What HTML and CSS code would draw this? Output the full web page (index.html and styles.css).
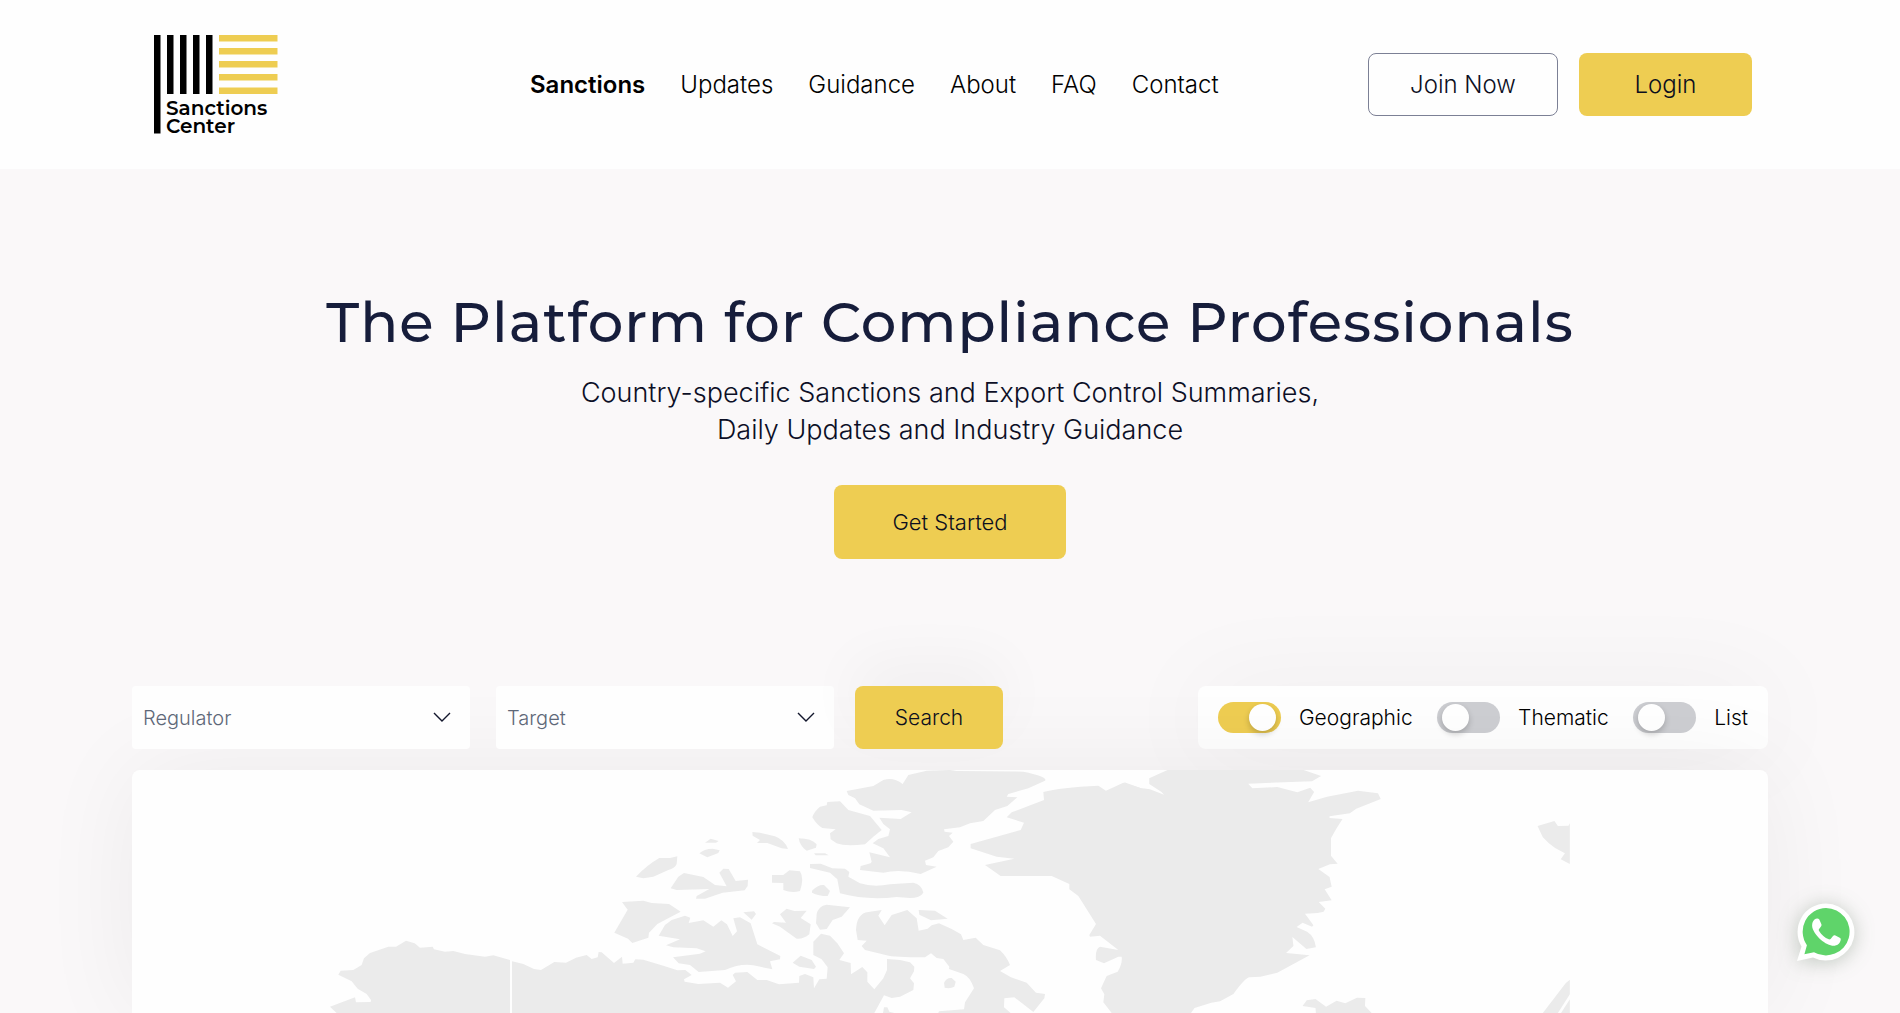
FILE: index.html
```html
<!DOCTYPE html>
<html lang="en">
<head>
<meta charset="utf-8">
<meta name="viewport" content="width=device-width, initial-scale=1">
<title>Sanctions Center</title>
<link rel="stylesheet" href="styles.css">
</head>
<body>
<header class="site-header">
  <div class="header-inner">
    <a class="logo" href="#" aria-label="Sanctions Center">
      <svg width="125" height="99" viewBox="0 0 125 99">
        <g fill="#000">
          <rect x="0" y="0" width="6.5" height="98.500"/>
          <rect x="13" y="0" width="6.5" height="59"/>
          <rect x="26" y="0" width="6.5" height="59"/>
          <rect x="39" y="0" width="6.5" height="59"/>
          <rect x="52" y="0" width="6.5" height="59"/>
        </g>
        <g fill="#eecd52">
          <rect x="65" y="0" width="58.500" height="6.5"/>
          <rect x="65" y="13" width="58.500" height="6.5"/>
          <rect x="65" y="26" width="58.500" height="6.5"/>
          <rect x="65" y="39" width="58.500" height="6.5"/>
          <rect x="65" y="52.500" width="58.500" height="6.5"/>
        </g>
        <g class="logo-text">
          <text x="12" y="80">Sanctions</text>
          <text x="12" y="98">Center</text>
        </g>
      </svg>
    </a>
    <nav class="main-nav">
      <a class="current" href="#">Sanctions</a>
      <a href="#">Updates</a>
      <a href="#">Guidance</a>
      <a href="#">About</a>
      <a href="#">FAQ</a>
      <a href="#">Contact</a>
    </nav>
    <div class="account">
      <button class="btn btn-outline" type="button">Join Now</button>
      <button class="btn btn-login" type="button">Login</button>
    </div>
  </div>
</header>

<main class="page">
  <section class="hero">
    <h1>The Platform for Compliance Professionals</h1>
    <p>Country-specific Sanctions and Export Control Summaries,<br>Daily Updates and Industry Guidance</p>
    <button class="btn btn-start" type="button">Get Started</button>
  </section>

  <section class="explorer">
    <div class="toolbar">
      <form class="filters">
        <div class="select-box">
          <select aria-label="Regulator"><option>Regulator</option></select>
          <svg class="chevron" width="18" height="11" viewBox="0 0 18 11"><path d="M1 1l8 8 8-8"/></svg>
        </div>
        <div class="select-box">
          <select aria-label="Target"><option>Target</option></select>
          <svg class="chevron" width="18" height="11" viewBox="0 0 18 11"><path d="M1 1l8 8 8-8"/></svg>
        </div>
        <button class="btn btn-search" type="button">Search</button>
      </form>
      <div class="modes">
        <label><input type="checkbox" class="switch" checked>Geographic</label>
        <label><input type="checkbox" class="switch">Thematic</label>
        <label><input type="checkbox" class="switch">List</label>
      </div>
    </div>
    <div class="map-card">
      <svg class="map" viewBox="60 0 3720 729" role="img" aria-label="World map">
        <!-- Alaska and the western Arctic -->
        <path d="M60 710L135 682 138 697 182 696 183 690 170 672 143 656 125 634 85 614 92 602 130 600 155 585 162 565 180 549 235 530 258 530 288 512 314 520 330 533 368 530 372 538 405 545 430 543 465 552 525 560 550 556 600 570V729H80z"/>
        <path d="M606 574L640 582 672 597 693 600 733 576 768 578 798 563 830 555 845 567 863 562 866 546 875 547 912 579 936 560 938 581 970 578 976 568 1000 569 1060 587 1102 601 1126 600 1145 615 1122 628 1124 635 1165 642 1230 638 1254 653 1278 634 1268 615 1275 608 1312 606 1342 630 1370 630 1407 643 1467 638 1468 618 1485 612 1510 622 1512 655 1528 628 1550 626 1553 592 1535 568 1510 555 1510 515 1533 491 1560 497 1582 520 1602 550 1588 570 1622 579 1623 613 1657 591 1672 607 1672 635 1693 658 1720 625 1731 600 1731 567 1770 570 1800 577 1813 590 1812 604 1800 625 1812 640 1810 660 1770 680 1745 684 1722 676 1693 729H606z"/>
        <path d="M978 320Q1010 286 1048 264L1080 264 1102 259 1100 282Q1094 296 1075 300L1030 320 1000 325z"/>
        <path d="M1185 218L1202 206 1226 213 1218 218zM1168 250Q1182 236 1208 236L1229 241 1225 249 1192 262zM1327 186L1350 188 1395 199Q1424 210 1434 237L1415 235 1372 219 1341 219 1350 210 1328 197z"/>
        <path d="M1082 355L1105 320 1122 309 1180 321 1215 345 1250 349 1228 308 1240 296 1256 297 1277 333 1314 329 1313 348 1304 361 1238 368 1185 386 1158 386 1160 378 1198 357 1100 360z"/>
        <path d="M936 396L1000 392 1025 399 1077 402 1112 425 1042 462 1017 488 1015 503 967 519 954 506 913 488 953 419z"/>
        <path d="M1046 497L1065 465 1085 450 1125 437 1141 443 1136 459 1180 451 1210 470 1234 451 1251 463 1268 498 1281 484 1270 445 1290 442 1322 460 1342 523 1411 558 1410 568 1380 574 1387 598 1330 586Q1290 580 1245 600L1166 606 1140 585 1106 580 1089 562 1170 551 1187 544 1160 535 1090 532 1068 526 1110 508z"/>
        <path d="M1300 427L1332 424 1338 432 1325 449z"/>
        <!-- Central and eastern Arctic islands -->
        <g transform="translate(1320 0)">
          <path d="M290 63L370 48 400 30Q430 20 458 42L475 15 530 2 600 0 620 3 820 5Q895 20 885 32L835 55 775 72 770 80 802 82 772 108 735 120 700 153 660 160 630 172 582 178 584 185 608 188 597 198 610 215 595 232 565 243 550 262 525 272 528 285 560 290 512 312Q450 296 400 308L330 300 332 288 362 280 365 275 358 247 420 262 400 235 368 220 385 207 415 198 420 178 400 162 388 143 452 147 485 127 455 120 370 122 328 103 315 85 295 75z"/>
          <path d="M232 96L270 94 295 120 360 138 395 180 370 200 345 223Q285 230 260 220L242 208 240 190 257 178 217 174Q200 164 187 142 192 125 210 110L230 106z"/>
          <path d="M180 282L212 281 247 295 285 296 298 306 295 320 330 340Q370 353 420 343L490 338Q515 343 520 368 510 384 480 384L440 381Q350 392 270 370L262 328 240 308 180 294z"/>
          <path d="M146 205Q185 205 200 223L198 233 170 242Q150 230 146 205zM192 250L225 250 236 256H197zM66 315L100 315 118 301 150 304Q163 325 150 363 125 370 100 360L100 339 66 338zM186 362Q205 343 222 345L240 363 233 378Q205 378 186 368zM90 433L110 416 133 423 170 422 152 444 182 463 178 493Q160 508 140 506L90 470 66 460 72 456 108 458zM200 432Q205 408 230 404L300 412 275 440 248 450 230 477 210 479 198 460zM128 578L152 557 185 570 198 590 192 597 148 590zM506 420L555 422 593 446 543 451 508 434z"/>
          <path d="M318 480Q320 430 355 426L395 420 385 437 404 466 425 435 472 420 500 445 506 482 533 476 545 466 567 460 605 477 633 493 640 510 677 503 700 525 750 541Q770 560 780 585L750 603 783 622 830 638 858 668 885 672 883 685 850 726 793 682 763 685 762 712 782 729H565L567 724 642 718 645 697 672 655Q660 620 640 612L597 597 598 590 580 567 560 564 543 550 525 562Q430 562 410 556L345 540 335 528 350 512 323 510z"/>
          <path class="lake" d="M582 638Q590 622 605 624L617 635 613 650Q600 657 584 653z"/>
          <path d="M402 712L412 712 418 725 433 729H399z"/>
          <!-- Western Greenland -->
          <path d="M880 66Q930 52 1045 47L1068 62 1120 38 1171 54V729H1085L1060 697 1063 673 1053 655 1070 618 1103 605Q1118 580 1115 560L1105 560 1062 580 1038 570Q1035 535 1050 530L1105 540 1050 497 1020 500 1018 495 1038 462 985 378 958 358 958 342 905 318 752 318 705 285 793 266 740 260 662 235 662 222 812 180 822 158 770 142 785 127 882 90z"/>
        </g>
        <!-- Eastern Greenland, Iceland and Scandinavia -->
        <g transform="translate(2220 0) scale(1.0523 1)">
          <path d="M212 37L258 54 285 58 325 74 318 66 283 42 283 25 335 0H723L773 18 747 34 565 41 577 55 648 51 705 67 742 53 753 66 736 97 790 80 878 62 935 70 943 87 873 116 855 130 797 139 797 144 834 147 817 175 801 205V257L820 281 798 283 765 297 797 321 803 350 783 358 803 391 766 396 785 416 780 425 763 429 727 431 751 466 747 470 720 458 703 471 733 485Q755 500 758 532L731 537 691 501 694 528 673 549 740 556 648 608 600 620 568 622Q555 625 523 672L485 694 460 698 412 714 402 729H212z"/>
          <path d="M720 708L732 691 757 687 787 710 817 692 842 700 875 683 899 684 898 708 917 729H758L757 714zM1390 168L1438 153 1448 168 1478 167 1482 160V282L1456 268 1468 250 1440 234Q1420 220 1405 202zM1482 629V673L1448 729H1405L1470 640zM1482 688V729H1457z"/>
        </g>
      </svg>
    </div>
  </section>
</main>

<a class="whatsapp" href="#" aria-label="WhatsApp">
  <svg width="58" height="58" viewBox="0 0 58 58">
    <path fill="#fff" d="M29 .5a28.500 28.500 0 1 1-13 53.900L0 58l4.500-14.500A28.500 28.500 0 0 1 29 .5z"/>
    <path fill="#5fd46a" d="M29 5a23.700 23.700 0 1 1-12 44.200l-9.600 2 2.500-9A23.700 23.700 0 0 1 29 5z"/>
    <path fill="#fff" d="M17.500 16.500c1.500-1.200 4-1.300 4.800 0l2 4.500c.5 1.200.2 2-.7 3l-1.500 2c-.5.7-.4 1.200 0 2 2.400 4.200 5.700 6.700 9.700 8.300.8.300 1.400.2 2-.5l2.200-2.700c.7-.9 1.400-1 2.400-.5l4.300 2.100c1 .5 1.200 1 1 2.200-.7 3.700-3.600 5.700-7.100 5.800-3.600 0-9-2.600-12.800-6-4.300-3.900-8.600-9.700-8.700-14 0-2.600.9-4.900 2.400-6.200z"/>
  </svg>
</a>
</body>
</html>
```
FILE: styles.css
```css
* { box-sizing: border-box; }

body {
  margin: 0;
  min-height: 100vh;
  display: flex;
  flex-direction: column;
  background: #faf8f9;
  color: #000;
  font-family: Inter, "Liberation Sans", sans-serif;
  font-size: 20px;
  font-weight: 350;
}

a { color: inherit; text-decoration: none; }
button, select { font: inherit; color: inherit; }

.site-header { background: #fefefe; }

.header-inner {
  display: flex;
  align-items: center;
  height: 169px;
  margin: 0 148px;
}

.logo { width: 382px; padding-left: 6px; }
.logo svg { display: block; overflow: visible; }
.logo-text {
  font-family: Montserrat, "DejaVu Sans", sans-serif;
  font-size: 20px;
  font-weight: 600;
}

.main-nav {
  display: flex;
  gap: 35px;
  font-size: 24px;
  white-space: nowrap;
}
.current { font-weight: 600; }

.account { display: flex; gap: 21px; margin-left: auto; }

.btn {
  height: 63px;
  padding: 0;
  border: 0;
  border-radius: 8px;
  background: #eecd52;
  color: #0c0f1e;
  cursor: pointer;
}
.btn-outline {
  width: 190px;
  border: 1px solid #7c8095;
  background: #fefefe;
  font-size: 24px;
}
.btn-login { width: 173px; font-size: 24px; }
.btn-start { width: 232px; height: 74px; font-size: 22px; }
.btn-search { width: 148px; font-size: 21px; }

.page {
  flex: 1;
  display: flex;
  flex-direction: column;
  overflow: hidden;
}

.hero {
  display: flex;
  flex-direction: column;
  align-items: center;
  padding: 117px 24px 127px;
  text-align: center;
}
.hero h1 {
  margin: 0;
  color: #161d3b;
  font-family: Montserrat, Inter, sans-serif;
  font-size: 56px;
  font-weight: 500;
  line-height: 72px;
  letter-spacing: 1px;
}
.hero p {
  margin: 16px 0 37px;
  color: #0c0f26;
  font-size: 27px;
  font-weight: 300;
  line-height: 37px;
}

.explorer {
  flex: 1;
  display: flex;
  flex-direction: column;
  gap: 21px;
  padding: 0 132px;
}

.toolbar { display: flex; justify-content: space-between; }

.filters { position: relative; z-index: 1; display: flex; }
.select-box {
  display: grid;
  align-items: center;
  width: 338px;
  margin-right: 26px;
  border-radius: 4px;
  background: #fefefe;
}
.select-box + .btn-search {
  margin-left: -5px;
  box-shadow: 0 -24px 60px rgba(0, 0, 0, .04);
}
.select-box select {
  grid-area: 1 / 1;
  width: 100%;
  height: 63px;
  padding: 0 48px 0 11px;
  border: 0;
  background: transparent;
  color: #5e6878;
  appearance: none;
}
.chevron {
  grid-area: 1 / 1;
  justify-self: end;
  margin-right: 19px;
  fill: none;
  stroke: #12162c;
  stroke-width: 1.4px;
  pointer-events: none;
}

.modes {
  display: flex;
  align-items: center;
  justify-content: space-between;
  width: 570px;
  padding: 0 20px;
  border-radius: 8px;
  background: #fefefe;
  box-shadow: 0 0 100px rgba(0, 0, 0, .05);
  font-size: 21px;
}
.modes label { display: flex; align-items: center; gap: 18px; }

.switch {
  width: 63px;
  height: 31px;
  margin: 0;
  padding: 2px 5px;
  border-radius: 16px;
  background: #cdced2;
  appearance: none;
}
.switch::before {
  content: "";
  display: block;
  width: 27px;
  height: 27px;
  border-radius: 50%;
  background: #fff;
  box-shadow: 0 3px 6px rgba(0, 0, 0, .2);
}
.switch:checked { background: #eecd52; }
.switch:checked::before { margin-left: auto; }

.map-card {
  flex: 1;
  min-height: 243px;
  border-radius: 8px 8px 0 0;
  background: #fefefe;
  box-shadow: 0 0 100px rgba(0, 0, 0, .06);
}
.map {
  display: block;
  width: 1240px;
  max-width: 100%;
  margin: 0 auto;
  fill: #ebebeb;
}

.whatsapp {
  position: fixed;
  right: 45px;
  bottom: 52px;
  filter: drop-shadow(0 2px 10px rgba(60, 90, 60, .3));
}
.whatsapp svg { display: block; }
```
